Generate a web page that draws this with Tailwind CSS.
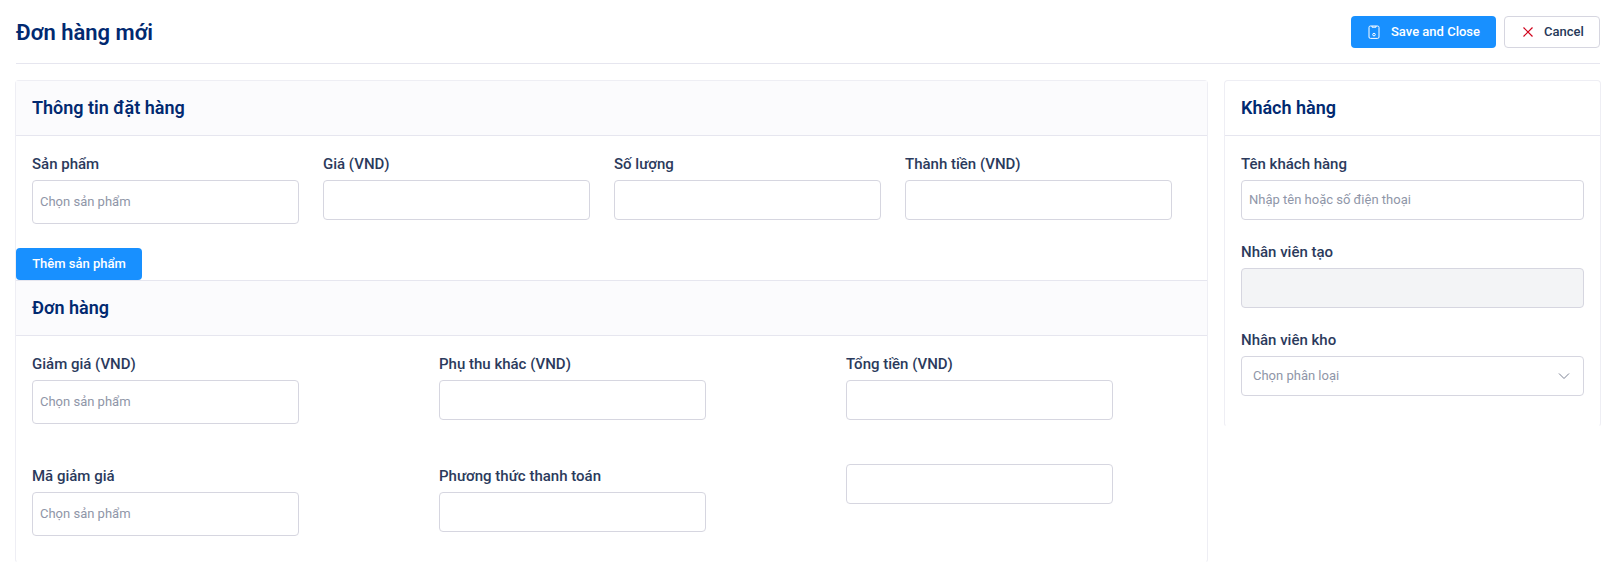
<!DOCTYPE html>
<html lang="vi">
<head>
  <meta charset="UTF-8" />
  <meta name="viewport" content="width=device-width, initial-scale=1.0" />
  <title>Đơn hàng mới</title>
  <script src="https://cdn.jsdelivr.net/npm/@tailwindcss/browser@4"></script>
</head>
<body class="bg-white font-['Roboto',sans-serif] antialiased px-4 overflow-hidden">

  <!-- Header -->
  <div class="flex items-center justify-between h-16 border-b border-[#e6e6ef]">
    <h1 class="text-[22px] font-semibold text-[#012970] mt-[2px]">Đơn hàng mới</h1>
    <div class="flex gap-2">
      <button class="flex items-center h-8 w-[145px] pl-4 gap-2.5 rounded bg-[#1890ff] text-white text-[13px] font-medium">
        <svg class="w-[14px] h-[14px]" viewBox="0 0 14 14" fill="none" stroke="currentColor" stroke-width="1">
          <path d="M3.4 1h7.2a1.4 1.4 0 0 1 1.4 1.4v9.6a1.4 1.4 0 0 1-1.4 1.4H3.4A1.4 1.4 0 0 1 2 12V2.4A1.4 1.4 0 0 1 3.4 1z" />
          <path d="M5 1v1.2h4V1" />
          <circle cx="7" cy="9.6" r="1.3" />
        </svg>
        Save and Close
      </button>
      <button class="flex items-center h-8 w-[96px] pl-[17px] gap-2.5 rounded border border-[#d6d6e0] bg-white text-[#253858] text-[13px] font-medium">
        <svg class="w-[12px] h-[12px] text-[#d0021b]" viewBox="0 0 12 12" fill="none" stroke="currentColor" stroke-width="1.2">
          <path d="M1.5 1.5l9 9M10.5 1.5l-9 9" />
        </svg>
        Cancel
      </button>
    </div>
  </div>

  <div class="flex gap-4 mt-4 -ml-px -mr-px items-start">

    <!-- Thông tin đặt hàng -->
    <div class="w-[1193px] rounded border border-[#eeeef4] border-b-white">
      <div class="h-[55px] flex items-center px-4 bg-[#fbfbfd] border-b border-[#e6e6ef]">
        <h2 class="text-lg font-semibold text-[#012970]">Thông tin đặt hàng</h2>
      </div>
      <div class="grid grid-cols-[repeat(4,267px)] gap-x-6 px-4 pt-4 pb-6 items-start">
        <div>
          <label class="block text-[15px] font-medium text-[#2b3a5c] leading-6 mb-1">Sản phẩm</label>
          <div class="h-11 flex items-center px-[7px] rounded border border-[#d6d6e0] text-[13px] text-[#8f96a8]">Chọn sản phẩm</div>
        </div>
        <div>
          <label class="block text-[15px] font-medium text-[#2b3a5c] leading-6 mb-1">Giá (VND)</label>
          <div class="h-10 rounded border border-[#d6d6e0]"></div>
        </div>
        <div>
          <label class="block text-[15px] font-medium text-[#2b3a5c] leading-6 mb-1">Số lượng</label>
          <div class="h-10 rounded border border-[#d6d6e0]"></div>
        </div>
        <div>
          <label class="block text-[15px] font-medium text-[#2b3a5c] leading-6 mb-1">Thành tiền (VND)</label>
          <div class="h-10 rounded border border-[#d6d6e0]"></div>
        </div>
      </div>
      <button class="block h-8 w-[126px] rounded bg-[#1890ff] text-white text-[13px] font-medium">Thêm sản phẩm</button>

      <!-- Đơn hàng -->
      <div class="h-14 flex items-center px-4 bg-[#fbfbfd] border-y border-[#e6e6ef]">
        <h2 class="text-lg font-semibold text-[#012970]">Đơn hàng</h2>
      </div>
      <div class="grid grid-cols-[repeat(3,267px)] gap-x-[140px] gap-y-10 px-4 pt-4 pb-[26px] items-start">
        <div>
          <label class="block text-[15px] font-medium text-[#2b3a5c] leading-6 mb-1">Giảm giá (VND)</label>
          <div class="h-11 flex items-center px-[7px] rounded border border-[#d6d6e0] text-[13px] text-[#8f96a8]">Chọn sản phẩm</div>
        </div>
        <div>
          <label class="block text-[15px] font-medium text-[#2b3a5c] leading-6 mb-1">Phụ thu khác (VND)</label>
          <div class="h-10 rounded border border-[#d6d6e0]"></div>
        </div>
        <div>
          <label class="block text-[15px] font-medium text-[#2b3a5c] leading-6 mb-1">Tổng tiền (VND)</label>
          <div class="h-10 rounded border border-[#d6d6e0]"></div>
        </div>
        <div>
          <label class="block text-[15px] font-medium text-[#2b3a5c] leading-6 mb-1">Mã giảm giá</label>
          <div class="h-11 flex items-center px-[7px] rounded border border-[#d6d6e0] text-[13px] text-[#8f96a8]">Chọn sản phẩm</div>
        </div>
        <div>
          <label class="block text-[15px] font-medium text-[#2b3a5c] leading-6 mb-1">Phương thức thanh toán</label>
          <div class="h-10 rounded border border-[#d6d6e0]"></div>
        </div>
        <div class="h-10 rounded border border-[#d6d6e0]"></div>
      </div>
    </div>

    <!-- Khách hàng -->
    <div class="flex-1 rounded border border-[#eeeef4] border-b-white">
      <div class="h-[55px] flex items-center px-4 border-b border-[#e6e6ef]">
        <h2 class="text-lg font-semibold text-[#012970]">Khách hàng</h2>
      </div>
      <div class="flex flex-col gap-5 px-4 pt-4 pb-[30px]">
        <div>
          <label class="block text-[15px] font-medium text-[#2b3a5c] leading-6 mb-1">Tên khách hàng</label>
          <div class="h-10 flex items-center px-[7px] rounded border border-[#d6d6e0] text-[13px] text-[#8f96a8]">Nhập tên hoặc số điện thoại</div>
        </div>
        <div>
          <label class="block text-[15px] font-medium text-[#2b3a5c] leading-6 mb-1">Nhân viên tạo</label>
          <div class="h-10 rounded border border-[#d6d6e0] bg-[#f3f4f6]"></div>
        </div>
        <div>
          <label class="block text-[15px] font-medium text-[#2b3a5c] leading-6 mb-1">Nhân viên kho</label>
          <div class="h-10 flex items-center justify-between pl-[11px] pr-[13px] rounded border border-[#d6d6e0] text-[13px] text-[#8f96a8]">
            Chọn phân loại
            <svg class="w-3 h-3 text-[#7b8294]" viewBox="0 0 12 12" fill="none" stroke="currentColor" stroke-width="1"><path d="M1 3.5l5 5 5-5" /></svg>
          </div>
        </div>
      </div>
    </div>
  </div>
</body>
</html>
